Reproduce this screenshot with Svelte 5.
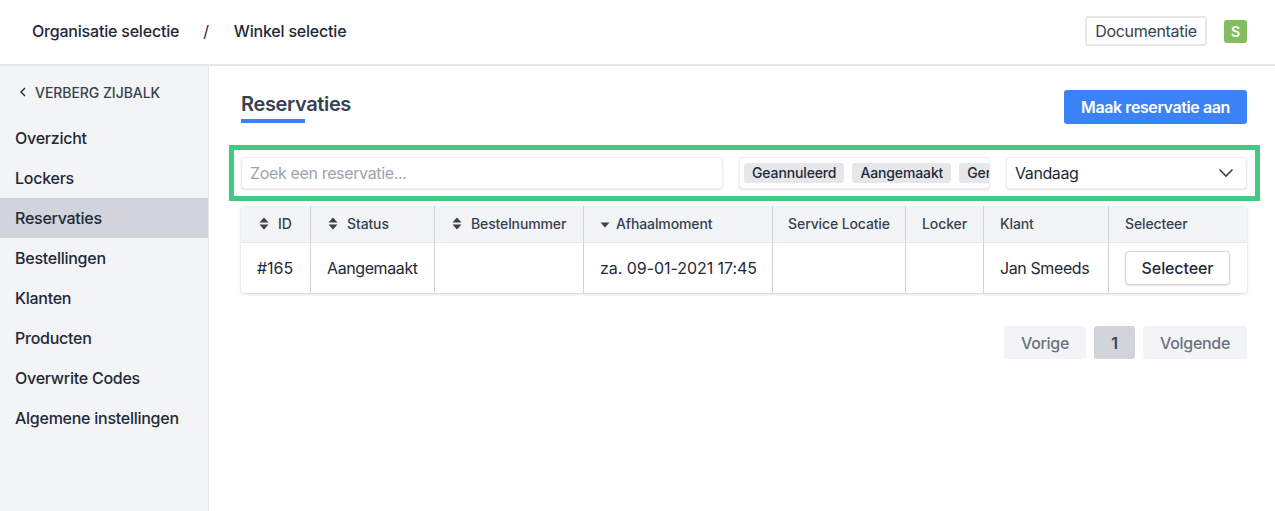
<script>
  const nav = ['Overzicht', 'Lockers', 'Reservaties', 'Bestellingen', 'Klanten', 'Producten', 'Overwrite Codes', 'Algemene instellingen'];
  const cols = [
    { label: 'ID', sort: 'both', w: 70 },
    { label: 'Status', sort: 'both', w: 124 },
    { label: 'Bestelnummer', sort: 'both', w: 149 },
    { label: 'Afhaalmoment', sort: 'down', w: 189 },
    { label: 'Service Locatie', w: 133 },
    { label: 'Locker', w: 78 },
    { label: 'Klant', w: 125 },
    { label: 'Selecteer', w: 138 }
  ];
  const row = ['#165', 'Aangemaakt', '', 'za. 09-01-2021 17:45', '', '', 'Jan Smeeds'];
  const tracks = cols.map((c) => c.w + 'px').join(' ');
</script>

<div class="page">
  <header class="top">
    <nav class="crumbs">
      <span>Organisatie selectie</span>
      <span class="slash">/</span>
      <span>Winkel selectie</span>
    </nav>
    <div class="top-right">
      <button class="doc">Documentatie</button>
      <span class="avatar">S</span>
    </div>
  </header>

  <div class="body">
    <aside class="side">
      <div class="hide">
        <svg width="10" height="12" viewBox="0 0 10 12"><path d="M7 2 3 6l4 4" fill="none" stroke="#1f2937" stroke-width="1.4" /></svg>
        <span>VERBERG ZIJBALK</span>
      </div>
      <ul>
        {#each nav as n}
          <li class:active={n === 'Reservaties'}>{n}</li>
        {/each}
      </ul>
    </aside>

    <main class="main">
      <div class="title-row">
        <h1>Reservaties</h1>
        <button class="primary">Maak reservatie aan</button>
      </div>

      <div class="filters">
        <div class="field search">Zoek een reservatie...</div>
        <div class="field tags">
          <span class="tag">Geannuleerd</span>
          <span class="tag">Aangemaakt</span>
          <span class="tag">Gereserveerd</span>
        </div>
        <div class="field select">
          <span>Vandaag</span>
          <svg width="16" height="10" viewBox="0 0 16 10"><path d="M1.5 1.5 8 8l6.500-6.500" fill="none" stroke="#374151" stroke-width="1.600" /></svg>
        </div>
      </div>

      <div class="table" style="grid-template-columns: {tracks}">
        {#each cols as c, i}
          <div class="th" class:line={i < cols.length - 1}>
            {#if c.sort === 'both'}
              <svg width="10" height="13" viewBox="0 0 10 13"><path d="M5 0.500 9.500 5.500H.5zM5 12.500.5 7.500h9z" fill="#374151" /></svg>
            {:else if c.sort === 'down'}
              <svg width="10" height="12" viewBox="0 0 10 12"><path d="M5 9.500 .5 4.500h9z" fill="#374151" /></svg>
            {/if}
            <span>{c.label}</span>
          </div>
        {/each}
        {#each row as cell}
          <div class="td line" class:digits={/\d/.test(cell)}>{cell}</div>
        {/each}
        <div class="td"><button class="pick">Selecteer</button></div>
      </div>

      <div class="pager">
        <button class="pg prev">Vorige</button>
        <button class="pg cur">1</button>
        <button class="pg next">Volgende</button>
      </div>
    </main>
  </div>
</div>

<style>
  :global(body) {
    margin: 0;
    background: #fff;
    font-family: Inter, "Liberation Sans", sans-serif;
    color: #1f2937;
  }
  button {
    font-family: inherit;
    cursor: pointer;
  }
  .page {
    height: 511px;
    display: flex;
    flex-direction: column;
    overflow: hidden;
  }
  .top {
    height: 66px;
    flex: none;
    box-sizing: border-box;
    border-bottom: 2px solid #e5e7eb;
    display: flex;
    align-items: center;
    justify-content: space-between;
    padding: 0 28px 2px 32px;
    font-size: 16px;
    font-weight: 500;
    letter-spacing: -0.2px;
  }
  .crumbs {
    display: flex;
    gap: 24px;
  }
  .slash {
    font-weight: 400;
    margin-right: 1px;
  }
  .top-right {
    display: flex;
    align-items: center;
    gap: 17px;
  }
  .doc {
    width: 122px;
    height: 30px;
    padding: 0;
    background: #fff;
    border: 2px solid #e5e7eb;
    border-radius: 3px;
    font-size: 16px;
    font-weight: 400;
    letter-spacing: -0.3px;
    color: #374151;
  }
  .avatar {
    width: 23px;
    height: 23px;
    border-radius: 3px;
    background: #84bd5f;
    color: #fff;
    font-size: 14px;
    font-weight: 600;
    display: flex;
    align-items: center;
    justify-content: center;
  }
  .body {
    flex: 1;
    display: flex;
    min-height: 0;
  }
  .side {
    width: 208px;
    flex: none;
    background: #f3f4f6;
    border-right: 1px solid #e5e7eb;
  }
  .hide {
    height: 52px;
    padding-left: 18px;
    display: flex;
    align-items: center;
    gap: 7px;
    font-size: 14px;
    font-weight: 500;
    letter-spacing: -0.05px;
    color: #374151;
  }
  .side ul {
    list-style: none;
    margin: 0;
    padding: 0;
  }
  .side li {
    height: 40px;
    line-height: 41px;
    padding-left: 15px;
    font-size: 16px;
    font-weight: 500;
    letter-spacing: -0.26px;
    color: #1f2937;
  }
  .side li.active {
    background: #d1d5db;
  }
  .main {
    flex: 1;
    padding: 0 28px 0 32px;
  }
  .title-row {
    height: 79px;
    display: flex;
    justify-content: space-between;
    align-items: flex-start;
    padding-top: 24px;
    box-sizing: border-box;
  }
  h1 {
    margin: 0;
    padding-bottom: 5px;
    font-size: 20px;
    line-height: 28px;
    font-weight: 600;
    letter-spacing: -0.35px;
    color: #374151;
    position: relative;
  }
  h1::after {
    content: "";
    position: absolute;
    left: 0;
    bottom: 0;
    width: 64px;
    height: 4px;
    background: #3b82f6;
  }
  .primary {
    width: 183px;
    height: 34px;
    padding: 0;
    background: #3b82f6;
    color: #fff;
    border: 0;
    border-radius: 3px;
    font-size: 16px;
    font-weight: 600;
    letter-spacing: -0.4px;
  }
  .filters {
    margin: 0 -13px 0 -12px;
    height: 56px;
    box-sizing: border-box;
    border: 5px solid #42ca85;
    padding: 0 8px 0 7px;
    display: flex;
    align-items: center;
    gap: 16px;
  }
  .field {
    height: 32px;
    box-sizing: border-box;
    background: #fff;
    border: 1px solid #eceef1;
    border-radius: 4px;
    box-shadow: 0 1px 2px rgba(0, 0, 0, 0.12);
    display: flex;
    align-items: center;
    font-size: 16px;
  }
  .search {
    width: 482px;
    padding-left: 8px;
    letter-spacing: -0.35px;
    color: #9ca3af;
  }
  .tags {
    width: 251px;
    padding-left: 4px;
    gap: 8px;
    overflow: hidden;
  }
  .tag {
    flex: none;
    height: 20px;
    line-height: 20px;
    padding: 0 8px;
    border-radius: 3px;
    background: #e5e7eb;
    font-size: 14px;
    font-weight: 500;
    letter-spacing: -0.13px;
    color: #1f2937;
  }
  .select {
    width: 241px;
    padding: 0 12px 0 8px;
    justify-content: space-between;
    letter-spacing: -0.4px;
    color: #1f2937;
  }
  .table {
    margin-top: 5px;
    display: grid;
    border-radius: 3px;
    box-shadow: 0 1px 3px rgba(0, 0, 0, 0.2);
    overflow: hidden;
    width: 1006px;
  }
  .th {
    height: 37px;
    padding-bottom: 1px;
    box-sizing: border-box;
    background: #f3f4f6;
    border-bottom: 1px solid #e5e7eb;
    display: flex;
    align-items: center;
    justify-content: center;
    gap: 8px;
    font-size: 14px;
    font-weight: 500;
    letter-spacing: -0.12px;
    color: #374151;
  }
  .th svg {
    flex: none;
  }
  .th:nth-child(1) {
    justify-content: flex-start;
    padding-left: 18px;
    gap: 9px;
  }
  .th:nth-child(2) {
    justify-content: flex-start;
    padding-left: 17px;
    gap: 9px;
  }
  .th:nth-child(3) {
    justify-content: flex-start;
    padding-left: 17px;
    gap: 9px;
  }
  .th:nth-child(4) {
    justify-content: flex-start;
    padding-left: 16px;
    gap: 6px;
  }
  .th:nth-child(7) {
    justify-content: flex-start;
    padding-left: 16px;
  }
  .th:nth-child(8) {
    justify-content: flex-start;
    padding-left: 16px;
  }
  .line {
    border-right: 1px solid #d1d5db;
  }
  .td {
    height: 50px;
    box-sizing: border-box;
    padding-left: 16px;
    display: flex;
    align-items: center;
    font-size: 16px;
    letter-spacing: -0.4px;
    color: #1f2937;
    white-space: nowrap;
  }
  .td.digits {
    letter-spacing: -0.05px;
  }
  .pick {
    width: 105px;
    height: 34px;
    padding: 0;
    background: #fff;
    border: 1px solid #d1d5db;
    border-radius: 4px;
    box-shadow: 0 1px 2px rgba(0, 0, 0, 0.12);
    font-size: 16px;
    font-weight: 500;
    letter-spacing: -0.1px;
    color: #1f2937;
  }
  .pager {
    margin-top: 33px;
    display: flex;
    justify-content: flex-end;
    gap: 8px;
  }
  .pg {
    height: 33px;
    padding: 0;
    border: 0;
    border-radius: 3px;
    background: #f3f4f6;
    color: #6b7280;
    font-size: 16px;
    font-weight: 500;
    letter-spacing: -0.3px;
  }
  .prev {
    width: 82px;
  }
  .cur {
    width: 41px;
    background: #d1d5db;
    color: #374151;
    font-weight: 600;
  }
  .next {
    width: 104px;
  }
</style>
